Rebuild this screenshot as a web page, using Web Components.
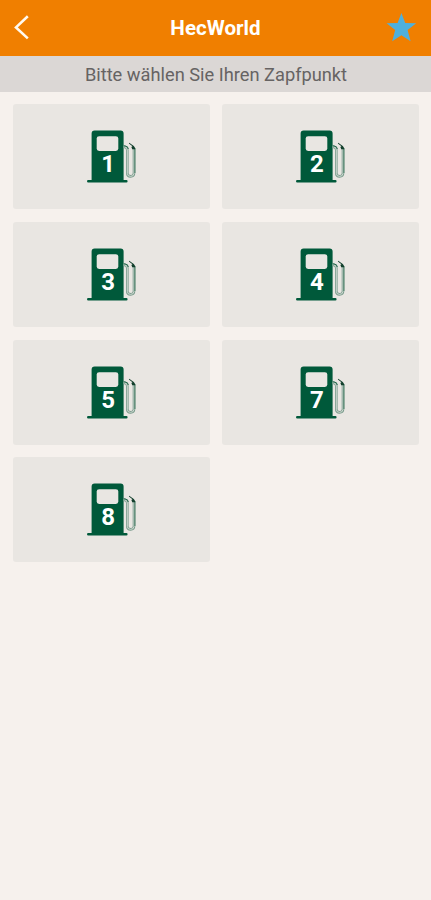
<!DOCTYPE html>
<html lang="de">
<head>
<meta charset="utf-8">
<title>HecWorld</title>
<style>
html, body { margin: 0; height: 100%; background: #f6f1ed; font-family: Roboto, "Liberation Sans", sans-serif; }
</style>
</head>
<body>
<pump-screen></pump-screen>
<script>
class AppBar extends HTMLElement {
  constructor() {
    super();
    this.attachShadow({ mode: 'open' }).innerHTML = `
      <style>
        :host { display: grid; grid-template-columns: 60px 1fr 60px; align-items: center; height: 56px; background: #f07f00; color: #fff; box-sizing: border-box; }
        h1 { margin: 0; font-size: 20.6px; line-height: 24px; font-weight: 700; text-align: center; white-space: nowrap; }
        svg { display: block; width: 60px; height: 56px; }
      </style>
      <svg viewBox="0 0 60 56" role="img" aria-label="Zurück"><path d="M27.8 16.3 16 27.4l11.8 11" fill="none" stroke="#fffaf0" stroke-width="2.6"/></svg>
      <h1><slot></slot></h1>
      <svg viewBox="371 0 60 56" role="img" aria-label="Favorit"><path d="M401.4 13l3.8 9.9 11 .3-8.6 6.8 3 11.3-9.2-6.1-9.2 6.1 3-11.3-8.6-6.8 11-.3z" fill="#4fb0dc"/></svg>`;
  }
}
customElements.define('app-bar', AppBar);

class HintBar extends HTMLElement {
  constructor() {
    super();
    this.attachShadow({ mode: 'open' }).innerHTML = `
      <style>
        :host { display: block; height: 36px; line-height: 37px; background: #dbd7d5; color: #666363; text-align: center; font-size: 18.25px; white-space: nowrap; padding-left: 1px; }
      </style><slot></slot>`;
  }
}
customElements.define('hint-bar', HintBar);

class PumpCard extends HTMLElement {
  constructor() {
    super();
    this.attachShadow({ mode: 'open' }).innerHTML = `
      <style>
        :host { display: flex; align-items: center; justify-content: center; height: 105px; border-radius: 3px; background: #e9e6e2; }
        .icon { display: grid; width: 49px; height: 53px; padding-left: .8px; }
        .icon > * { grid-area: 1 / 1; }
        svg { display: block; width: 49px; height: 53px; }
        .number { width: 41.6px; padding-top: 20px; text-align: center; color: #fff; font-size: 24px; line-height: 28px; font-weight: 700; }
      </style>
      <div class="icon">
        <svg viewBox="0 0 49 53" aria-hidden="true">
          <path d="M4.6 50V3.5Q4.6 .5 7.6 .5H33.6Q36.6 .5 36.6 3.5V50H39.4Q40.6 50 40.6 51.2T39.4 52.4H1.2Q0 52.4 0 51.2T1.2 50z" fill="#00593a"/>
          <rect x="9.7" y="6.2" width="21.6" height="14.8" rx="2.4" fill="#e9e6e2"/>
          <path d="M36.6 16.9H37.6Q40.3 17.2 40.3 20V43.3Q40.3 46.4 43.6 46.4T47 43.3V18" fill="none" stroke="#789b8b" stroke-width="2.6"/>
          <path d="M36.6 16.9H37.6Q40.3 17.2 40.3 20V43.3Q40.3 46.4 43.6 46.4T47 43.3V18" fill="none" stroke="#d0d9d2" stroke-width="1"/>
          <path d="M36.6 15.9H38Q41.1 16.2 41.3 19" fill="none" stroke="#24674b" stroke-width="1"/>
          <path d="M47.9 18V43" fill="none" stroke="#24674b" stroke-width=".8"/>
          <path d="M42.2 12.7l4.6 3.4Q48.2 17.3 48.2 19.3h-3l-.8-2.3 1-.8-3.5-2.6z" fill="#123f2c"/>
        </svg>
        <div class="number"><slot></slot></div>
      </div>`;
  }
}
customElements.define('pump-card', PumpCard);

class PumpGrid extends HTMLElement {
  constructor() {
    super();
    this.attachShadow({ mode: 'open' }).innerHTML = `
      <style>
        :host { display: grid; grid-template-columns: 1fr 1fr; gap: 12.8px 12px; padding: 12px 12.5px 12px 13px; }
      </style><slot></slot>`;
  }
}
customElements.define('pump-grid', PumpGrid);

class PumpScreen extends HTMLElement {
  constructor() {
    super();
    this.attachShadow({ mode: 'open' }).innerHTML = `
      <style>:host { display: block; }</style>
      <app-bar>HecWorld</app-bar>
      <hint-bar>Bitte wählen Sie Ihren Zapfpunkt</hint-bar>
      <pump-grid>${[1, 2, 3, 4, 5, 7, 8].map(n => `<pump-card>${n}</pump-card>`).join('')}</pump-grid>`;
  }
}
customElements.define('pump-screen', PumpScreen);
</script>
</body>
</html>
